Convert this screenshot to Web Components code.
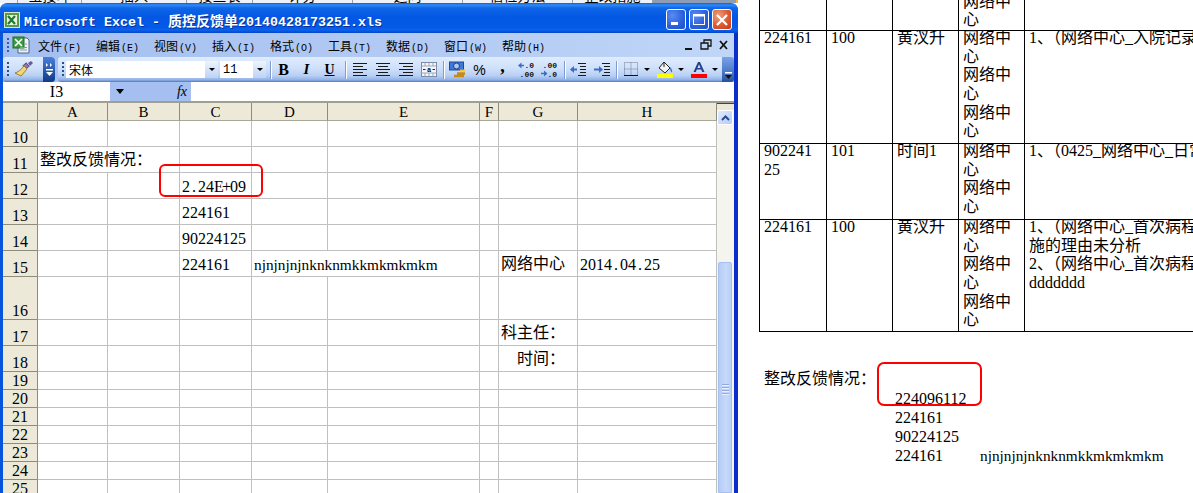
<!DOCTYPE html>
<html lang="zh">
<head>
<meta charset="utf-8">
<title>质控反馈单</title>
<style>
  html, body { margin: 0; height: 100%; overflow: hidden; background: #fff; }
  body { font-family: "Liberation Serif", "Noto Sans CJK SC", serif; }
  #desk { display: grid; grid-template-columns: 738px 1fr; height: 493px; overflow: hidden; }
  #left { display: flex; flex-direction: column; min-width: 0; overflow: hidden; }
</style>
</head>
<body>
<div id="desk">
  <div id="left">
    <behind-strip></behind-strip>
    <xp-window label="质控反馈单20140428173251.xls">
      <menu-bar></menu-bar>
      <format-bar></format-bar>
      <formula-bar></formula-bar>
      <sheet-grid></sheet-grid>
    </xp-window>
  </div>
  <doc-view></doc-view>
</div>

<script>
const CJK = '"Noto Sans CJK SC", "Liberation Serif", serif';
const SERIF = '"Liberation Serif", "Noto Sans CJK SC", serif';
const MONO = '"Liberation Mono", "Noto Sans CJK SC", monospace';

class BehindStrip extends HTMLElement {
  constructor() {
    super();
    const cells = [[18, ""], [64, "宝接呻"], [105, "插入"], [66, "接查表"], [100, "评分"], [110, "追问"], [110, "信检方法"], [80, "整改措施"]];
    this.attachShadow({ mode: "open" }).innerHTML = `
      <style>
        :host { display: flex; height: 3px; overflow: hidden; background: #eef1f8; flex: none; font: 14px ${CJK}; color: #000; }
        div { flex: none; height: 3px; border-right: 1px solid #98a0a8; box-sizing: border-box; position: relative; overflow: hidden; }
        span { display: block; margin-top: -13px; line-height: 16px; text-align: center; }
        i { flex: 1; background: linear-gradient(90deg, #8f9cb5 98%, #f0b840 98%); }
      </style>
      ${cells.map(c => `<div style="width:${c[0]}px"><span>${c[1]}</span></div>`).join("")}<i></i>`;
  }
}
customElements.define("behind-strip", BehindStrip);

class XpWindow extends HTMLElement {
  constructor() {
    super();
    this.attachShadow({ mode: "open" }).innerHTML = `
      <style>
        :host { display: flex; flex-direction: column; flex: 1; min-height: 0; background: linear-gradient(90deg, #0855dd 3px, #fff 3px, #fff 734px, #0a2fc8 734px); border-radius: 7px 7px 0 0; overflow: hidden; }
        .title { display: flex; align-items: center; height: 30px; flex: none; padding: 0 6px 0 4px; box-sizing: border-box;
          background: linear-gradient(#0a5fd8 0, #2f8af6 2px, #0f66e6 5px, #0357e4 14px, #0459e6 24px, #0a62ee 27px, #0346c8 30px); }
        .logo { width: 16px; height: 16px; margin-top: 3px; flex: none; }
        .cap { margin-left: 4px; color: #fff; font: bold 13.33px ${MONO}; white-space: nowrap; text-shadow: 1px 1px 0 #0a2f9a; margin-top: 3px; flex: 1; }
        .cap b { font: bold 14px ${CJK}; }
        .btn { width: 20px; height: 21px; margin-left: 3px; margin-top: 3px; box-sizing: border-box; border: 1px solid #fff; border-radius: 3px; flex: none; display: block;
          background: radial-gradient(circle at 30% 30%, #5a8cf0, #2a5fdc 60%, #2050c8); }
        .btn.x { background: radial-gradient(circle at 30% 30%, #f0a080, #dc5a30 55%, #c03c18); }
        .body { display: flex; flex-direction: column; flex: 1; min-height: 0; margin: 0 4px 0 3px; background: #fff; overflow: hidden; }
      </style>
      <div class="title">
        <svg class="logo" viewBox="0 0 16 16">
          <rect x=".5" y=".5" width="15" height="15" fill="#5a9a4c" stroke="#d8e8c8"/>
          <rect x="3" y="3" width="10" height="10" fill="#e8f4e0"/>
          <path d="M4 4l7 8M11 4l-7 8" stroke="#1f7a30" stroke-width="2.2"/>
        </svg>
        <div class="cap">Microsoft Excel - <b></b>20140428173251.xls</div>
        <svg class="btn" viewBox="0 0 18 19"><rect x="4" y="12" width="7" height="3" fill="#fff"/></svg>
        <svg class="btn" viewBox="0 0 18 19"><rect x="3.5" y="5.5" width="11" height="9" fill="none" stroke="#fff"/><rect x="3" y="4" width="12" height="2.5" fill="#fff"/></svg>
        <svg class="btn x" viewBox="0 0 18 19"><path d="M4 5l10 10M14 5L4 15" stroke="#fff" stroke-width="2.2"/></svg>
      </div>
      <div class="body"><slot></slot></div>`;
  }
  connectedCallback() {
    const name = this.getAttribute("label").match(/^\D+/)[0];
    this.shadowRoot.querySelector("b").textContent = name;
  }
}
customElements.define("xp-window", XpWindow);

class MenuBar extends HTMLElement {
  constructor() {
    super();
    const items = [["文件", "F"], ["编辑", "E"], ["视图", "V"], ["插入", "I"], ["格式", "O"], ["工具", "T"], ["数据", "D"], ["窗口", "W"], ["帮助", "H"]];
    this.attachShadow({ mode: "open" }).innerHTML = `
      <style>
        :host { display: flex; align-items: center; height: 24px; flex: none; background: linear-gradient(90deg, #a4bff0, #b2caf3 55%, #c0d6f8); font: 12px ${CJK}; color: #000; }
        .grip { width: 2px; height: 14px; margin-left: 4px; background: repeating-linear-gradient(#2d5fb0 0 2px, transparent 2px 4px); flex: none; }
        .doc { width: 18px; height: 18px; margin-left: 3px; flex: none; }
        .item { width: 58px; flex: none; white-space: nowrap; }
        .item span { font: 10px ${MONO}; margin-left: 1px; }
        .items { display: flex; margin-left: 8px; flex: 1; }
        .mdi { width: 48px; height: 12px; margin-right: 2px; flex: none; }
      </style>
      <div class="grip"></div>
      <svg class="doc" viewBox="0 0 18 18">
        <path d="M6 2h9l2 2v13H6z" fill="#eef3fb" stroke="#51647f"/>
        <rect x="1" y="1" width="11" height="11" fill="#3f9a44" stroke="#1f6a2a"/>
        <path d="M3 3l7 7M10 3l-7 7" stroke="#fff" stroke-width="1.6"/>
        <path d="M8 14h7M8 11.500h7M13 8h2" stroke="#7d94bd"/>
      </svg>
      <div class="items">${items.map(i => `<div class="item">${i[0]}<span>(${i[1]})</span></div>`).join("")}</div>
      <svg class="mdi" viewBox="0 0 48 12">
        <rect x="1" y="9" width="7" height="2" fill="#111"/>
        <path d="M17 4h7v6h-7zM20 4V1h7v6h-3" fill="none" stroke="#111" stroke-width="1.300"/>
        <path d="M36 2l7 8M43 2l-7 8" stroke="#111" stroke-width="1.800"/>
      </svg>`;
  }
}
customElements.define("menu-bar", MenuBar);

const lines = (ys) => ys.map(y => `<path d="M${y[0]} ${y[1]}H${y[2]}" stroke="#1a1a1a"/>`).join("");
const ICONS = {
  left: lines([[1, 2.5, 15], [1, 5.5, 11], [1, 8.5, 15], [1, 11.5, 11], [1, 14.5, 15]]),
  center: lines([[1, 2.5, 15], [3, 5.5, 13], [1, 8.5, 15], [3, 11.5, 13], [1, 14.5, 15]]),
  right: lines([[1, 2.5, 15], [5, 5.5, 15], [1, 8.5, 15], [5, 11.5, 15], [1, 14.5, 15]]),
  merge: `<rect x=".5" y="1.5" width="15" height="14" fill="#f4f6fb" stroke="#7c8aa5"/><path d="M.5 5h15M.5 12h15M4 1.500V5M8 1.500V5M12 1.500V5M4 12v3.500M8 12v3.500M12 12v3.500" stroke="#9aa7c0"/><text x="8" y="11" font-size="7" font-family="Liberation Mono" font-weight="bold" text-anchor="middle" fill="#111">a</text><path d="M2 8.500h2.500M14 8.500h-2.500" stroke="#222"/>`,
  currency: `<rect x=".5" y="1" width="14" height="8" fill="#3e78d8" stroke="#23489a"/><ellipse cx="7.500" cy="5" rx="3" ry="3" fill="#a8c8f0" stroke="#1d3d88"/><path d="M8 12.500h8M5 15h10" stroke="#c98a10" stroke-width="2.400"/><path d="M11 9.500h5" stroke="#f0c040" stroke-width="2"/>`,
  inc: `<text x="6.400" y="7" font-size="8" font-family="Liberation Mono" font-weight="bold" fill="#111">.0</text><text x="1.600" y="15.500" font-size="8" font-family="Liberation Mono" font-weight="bold" fill="#111">.00</text><path d="M2 4.500h4" stroke="#3b6fc6" stroke-width="1.600"/><path d="M3.500 1.500L0 4.500l3.500 3z" fill="#3b6fc6"/>`,
  dec: `<text x="1.600" y="7" font-size="8" font-family="Liberation Mono" font-weight="bold" fill="#111">.00</text><text x="6.400" y="15.500" font-size="8" font-family="Liberation Mono" font-weight="bold" fill="#111">.0</text><path d="M0 12.500h3" stroke="#3b6fc6" stroke-width="1.600"/><path d="M3 9.500l3.500 3-3.500 3z" fill="#3b6fc6"/>`,
  indentL: `<path d="M8 2.500h8M10 5.500h6M10 8.500h6M10 11.500h6M8 14.500h8" stroke="#1a1a1a"/><path d="M1 8.500h6" stroke="#3b6fc6" stroke-width="1.800"/><path d="M4 5L0 8.500 4 12z" fill="#3b6fc6"/>`,
  indentR: `<path d="M8 2.500h8M10 5.500h6M10 8.500h6M10 11.500h6M8 14.500h8" stroke="#1a1a1a"/><path d="M0 8.500h6" stroke="#3b6fc6" stroke-width="1.800"/><path d="M5 5l4 3.500L5 12z" fill="#3b6fc6"/>`,
  border: `<path d="M1.500 1.500h13v13h-13zM8 1.500v13M1.500 8h13" fill="none" stroke="#6a7a90" stroke-dasharray="1 1"/><path d="M1 14.500h14" stroke="#111"/>`,
  fill: `<path d="M7 1l6 6-5 5-6-5z" fill="#f4f4f4" stroke="#222"/><path d="M7 1v5" stroke="#222"/><path d="M13 6c2 2 2.500 4 2 5.500-1-.5-2-2-2-5.500z" fill="#3b6fc6"/><rect x="0" y="13" width="16" height="4" fill="#ffff00"/>`,
  color: `<path d="M2.500 11L7 1h2l4.500 10h-2.300l-1-2.500H5.800L4.800 11zM6.500 7h3L8 3.200z" fill="#24408a"/><rect x="0" y="13" width="16" height="4" fill="#ff0000"/>`,
};

class FormatBar extends HTMLElement {
  constructor() {
    super();
    const icon = (k, w) => `<span class="b" style="width:${w || 23}px"><svg width="16" height="17" viewBox="0 0 16 17">${ICONS[k]}</svg></span>`;
    const txt = (t, st) => `<span class="b" style="${st}">${t}</span>`;
    const drop = (w) => `<span class="b" style="width:${w}px"><i class="tri"></i></span>`;
    this.attachShadow({ mode: "open" }).innerHTML = `
      <style>
        :host { display: flex; height: 25px; flex: none; background: #a6c1f0; box-sizing: border-box; font: 12px ${CJK}; color: #000; }
        .bar { display: flex; align-items: center; height: 25px; box-sizing: border-box; border-radius: 3px;
          background: linear-gradient(#e0ecfe, #cfe0fa 45%, #b8cff4 75%, #8fb0e6 92%, #4f78bf); }
        .one { width: 52px; flex: none; position: relative; overflow: hidden; }
        .two { flex: 1; margin-left: 3px; min-width: 0; }
        .grip { width: 2px; height: 15px; margin-left: 4px; flex: none; background: repeating-linear-gradient(#27508f 0 2px, transparent 2px 4px); }
        .brush { width: 22px; height: 20px; margin-left: 4px; flex: none; }
        .chev { align-self: stretch; width: 12px; margin-left: auto; flex: none; display: flex; flex-direction: column; align-items: center; justify-content: flex-end; padding-bottom: 3px; box-sizing: border-box; gap: 2px; border-radius: 0 3px 3px 0; }
        .one .chev { background: linear-gradient(#4a80d8, #2455a8 60%, #123a8c); justify-content: center; padding-bottom: 0; }
        .two .chev { background: linear-gradient(#7aa2e6, #4a78c8 60%, #23509e); }
        .mark { display: block; }
        .combo { display: flex; height: 17px; background: #fff; flex: none; align-items: center; box-sizing: border-box; white-space: nowrap; }
        .combo em { font-style: normal; flex: 1; padding-left: 3px; }
        .combo u { display: flex; align-items: center; justify-content: center; width: 13px; height: 17px; text-decoration: none; flex: none; background: linear-gradient(#eef4fe, #bcd2f6); }
        .tri { width: 0; height: 0; border: 3px solid transparent; border-top: 3.500px solid #000; border-bottom: 0; display: block; }
        .sep { width: 1px; height: 18px; background: #7f9dd0; box-shadow: 1px 0 0 #fff; flex: none; }
        .b { display: flex; width: 23px; height: 20px; align-items: center; justify-content: center; flex: none; }
        .fn { margin-left: 2px; width: 152px; }
        .fs { margin-left: 2px; width: 46px; font: 12px ${MONO}; }
      </style>
      <div class="bar one">
        <div class="grip"></div>
        <svg class="brush" viewBox="0 0 22 20">
          <path d="M13 3l3 3-3 3-3-3z" fill="#8f7ab8" stroke="#5f4a88" transform="rotate(5 13 6)"/>
          <path d="M11 6l3 3-6 7-6-3c3-1 6-3 9-7z" fill="#f2d77a" stroke="#a07e20"/>
          <path d="M15 3l3-2 2 2-3 3z" fill="#6a5a9a"/>
        </svg>
        <div class="chev">
          <svg class="mark" width="7" height="4" viewBox="0 0 7 4"><path d="M0 0l2 2-2 2zM4 0l2 2-2 2z" fill="#fff"/></svg>
          <svg class="mark" width="7" height="7" viewBox="0 0 7 7"><path d="M0 0h7v1.500H0z" fill="#fff"/><path d="M0 3h7L3.500 7z" fill="#fff"/></svg>
        </div>
      </div>
      <div class="bar two">
        <div class="grip"></div>
        <div class="combo fn"><em>宋体</em><u><i class="tri"></i></u></div>
        <div class="combo fs"><em>11</em><u><i class="tri"></i></u></div>
        <div class="sep" style="margin-left:4px"></div>
        ${txt("B", `margin-left:1px;font:bold 16px 'Liberation Serif',serif`)}
        ${txt("I", `font:italic bold 15px 'Liberation Serif',serif`)}
        ${txt("<u>U</u>", `font:bold 14px 'Liberation Serif',serif`)}
        <div class="sep" style="margin-left:4px"></div>
        <span style="width:2px;flex:none"></span>
        ${icon("left")}${icon("center")}${icon("right")}${icon("merge")}
        <div class="sep" style="margin-left:3px"></div>
        <span style="width:1px;flex:none"></span>
        ${icon("currency")}
        ${txt("%", `font:14px 'Liberation Sans',sans-serif`)}
        ${txt(",", `font:bold 18px 'Liberation Serif',serif;padding-bottom:6px;height:14px`)}
        ${icon("inc")}${icon("dec")}
        <div class="sep" style="margin-left:4px"></div>
        <span style="width:1px;flex:none"></span>
        ${icon("indentL", 24)}${icon("indentR", 24)}
        <div class="sep" style="margin-left:2px"></div>
        <span style="width:3px;flex:none"></span>
        ${icon("border", 22)}${drop(10)}
        <span style="width:1px;flex:none"></span>
        ${icon("fill")}${drop(10)}
        <span style="width:1px;flex:none"></span>
        ${icon("color")}${drop(10)}
        <div class="chev">
          <svg class="mark" width="7" height="7" viewBox="0 0 7 7"><path d="M0 0h7v1.500H0z" fill="#fff"/><path d="M0 3h7L3.500 7z" fill="#111"/></svg>
        </div>
      </div>`;
  }
}
customElements.define("format-bar", FormatBar);

class FormulaBar extends HTMLElement {
  constructor() {
    super();
    this.attachShadow({ mode: "open" }).innerHTML = `
      <style>
        :host { display: flex; height: 21px; flex: none; box-sizing: border-box; border-bottom: 2px solid #a09f92; margin-top: 0; background: #fff; color: #000; }
        .name { width: 107px; text-align: center; font: 16px/19px ${SERIF}; flex: none; }
        .mid { width: 81px; background: #a4bff0; display: flex; align-items: center; flex: none; box-sizing: border-box; padding-left: 6px; }
        .tri { width: 0; height: 0; border: 4px solid transparent; border-top: 5px solid #000; border-bottom: 0; }
        .fx { margin-left: auto; margin-right: 4px; font: italic 14px "Liberation Serif", serif; }
      </style>
      <div class="name">I3</div>
      <div class="mid"><span class="tri"></span><span class="fx">fx</span></div>`;
  }
}
customElements.define("formula-bar", FormulaBar);

class SheetGrid extends HTMLElement {
  constructor() {
    super();
    const cols = [35, 70, 72, 72, 76, 152, 19, 79, 139];
    const heads = ["", "A", "B", "C", "D", "E", "F", "G", "H"];
    const rows = { 10: 26, 11: 26, 12: 26, 13: 26, 14: 26, 15: 26, 16: 43, 17: 26, 18: 26, 19: 18, 20: 18, 21: 18, 22: 18, 23: 18, 24: 18, 25: 18 };
    // SimSun keeps every latin glyph at the same width, the serif face only does for digits
    const fix = (s) => s.replace(/[^0-9]/g, m => `<b>${m}</b>`);
    const data = {
      "11,1": ["整改反馈情况：", "", "over"],
      "12,3": [fix("2.24E+09"), "la"],
      "13,3": ["224161", "la"],
      "14,3": ["90224125", "la"],
      "15,3": ["224161", "la"],
      "15,4": ["njnjnjnjnknknmkkmkmkmkm", "nj la", "over"],
      "15,7": ["网络中心"],
      "15,8": [fix("2014.04.25"), "la"],
      "17,7": ["科主任："],
      "18,7": ["　时间："],
    };
    let html = heads.map(h => `<div class="hd">${h}</div>`).join("");
    for (const r of Object.keys(rows)) {
      html += `<div class="rh">${r}</div>`;
      for (let c = 1; c < cols.length; c++) {
        const d = data[r + "," + c];
        html += d
          ? `<div class="c ${d[1] || ""} ${d[2] || ""}"><span>${d[0]}</span></div>`
          : `<div class="c"></div>`;
      }
    }
    this.attachShadow({ mode: "open" }).innerHTML = `
      <style>
        :host { display: flex; flex: 1; min-height: 0; overflow: hidden; background: #fff; color: #000; }
        .grid { display: grid; flex: none; width: 714px; overflow: hidden; align-content: start;
          grid-template-columns: ${cols.map(w => w + "px").join(" ")};
          grid-template-rows: 18px ${Object.values(rows).map(h => h + "px").join(" ")}; }
        .grid > div { box-sizing: border-box; min-width: 0; }
        .hd { background: #ece9d8; border-right: 1px solid #8e8d7c; border-bottom: 1px solid #aca899; text-align: center; font: 15px/18px ${SERIF}; }
        .rh { background: #ece9d8; border-right: 1px solid #8e8d7c; border-bottom: 1px solid #8e8d7c; text-align: center; font: 16px/1 ${SERIF}; display: flex; align-items: flex-end; justify-content: center; padding-bottom: 0; }
        .c { border-right: 1px solid #c0c0c0; border-bottom: 1px solid #c0c0c0; display: flex; align-items: flex-end; padding: 0 0 2px 2px; white-space: nowrap; font: 16px/18.670px ${SERIF}; }
        .c.la { padding-bottom: 1px; }
        .c.over { border-right: 0; }
        .c.nj { font-size: 15.300px; }
        .c b { font-weight: 400; display: inline-block; width: 8px; text-align: center; }
        .c span { display: block; }
        .bar { flex: 1; background: #f5f4ee; display: flex; flex-direction: column; align-items: stretch; min-width: 0; }
        .cap { height: 7px; flex: none; background: #ece9d8; border-top: 1px solid #444; box-sizing: border-box; }
        .up { height: 15px; margin: 0 1px 0 0; box-sizing: border-box; border: 1px solid #fff; border-radius: 2px; flex: none; background: linear-gradient(135deg, #dfeafd, #b7cdf6); display: flex; align-items: center; justify-content: center; }
        .track { height: 137px; flex: none; }
        .thumb { flex: 1; margin: 0 2px 0 1px; border-radius: 2px 2px 0 0; background: linear-gradient(90deg, #b5ccf5, #c7d9fb 60%, #b9cff5); border: 1px solid #a6c1ee; box-sizing: border-box; display: flex; flex-direction: column; align-items: center; padding-top: 121px; gap: 1px; }
        .thumb i { display: block; width: 7px; height: 1px; background: #8fabe0; box-shadow: 0 1px 0 #e8f0ff; margin-bottom: 1px; }
        .red { position: absolute; left: 159px; top: 164px; width: 104px; height: 33px; box-sizing: border-box; border: 2px solid #f00; border-radius: 6px; }
        svg { display: block; }
      </style>
      <div class="grid">${html}</div>
      <div class="bar">
        <div class="cap"></div>
        <div class="up"><svg width="9" height="6" viewBox="0 0 9 6"><path d="M1 5l3.500-3.500L8 5" fill="none" stroke="#2a4a90" stroke-width="2"/></svg></div>
        <div class="track"></div>
        <div class="thumb"><i></i><i></i><i></i><i></i></div>
      </div>
      <div class="red"></div>`;
  }
}
customElements.define("sheet-grid", SheetGrid);

class DocView extends HTMLElement {
  constructor() {
    super();
    const net = (n) => Array(n).fill("网络中<br>心").join("<br>");
    const rows = [
      ["", "", "", "网络中<br>心", ""],
      ["224161", "100", "黄汊升", net(3), "1、（网络中心_入院记录"],
      ["902241<br>25", "101", "时间1", net(2), "1、（0425_网络中心_日常"],
      ["224161", "100", "黄汊升", net(3), "1、（网络中心_首次病程<br>施的理由未分析<br>2、（网络中心_首次病程<br>ddddddd"],
    ];
    const hs = [31, 113, 76, 112];
    this.attachShadow({ mode: "open" }).innerHTML = `
      <style>
        :host { display: block; min-width: 0; overflow: hidden; padding-left: 21px; font: 16px/18.670px ${SERIF}; color: #000; }
        .table { display: grid; width: 600px; grid-template-columns: 67px 66px 66px 66px 1fr; grid-template-rows: ${hs.map(h => h + "px").join(" ")}; }
        .td { box-sizing: border-box; border-left: 1px solid #000; border-bottom: 1px solid #000; padding: 0 0 0 4px; overflow: hidden; white-space: nowrap; }
        .td > div { margin-top: -2px; }
        .td.end { display: flex; align-items: flex-end; }
        .nj { font-size: 15.300px; }
        .notes { display: grid; grid-template-columns: 131px 85px 1fr; grid-template-rows: 20px repeat(4, 19px); margin: 38px 0 0 5px; white-space: nowrap; }
        .notes div { min-width: 0; }
        .red { position: absolute; left: 877px; top: 362px; width: 105px; height: 44px; box-sizing: border-box; border: 2px solid #f00; border-radius: 7px; }
      </style>
      <div class="table">
        ${rows.map((r, i) => r.map(t => `<div class="td ${i === 0 ? "end" : ""}"><div>${t}</div></div>`).join("")).join("")}
      </div>
      <div class="notes">
        <div>整改反馈情况：</div><div></div><div></div>
        <div></div><div>224096112</div><div></div>
        <div></div><div>224161</div><div></div>
        <div></div><div>90224125</div><div></div>
        <div></div><div>224161</div><div class="nj">njnjnjnjnknknmkkmkmkmkm</div>
      </div>
      <div class="red"></div>`;
  }
}
customElements.define("doc-view", DocView);
</script>
</body>
</html>
